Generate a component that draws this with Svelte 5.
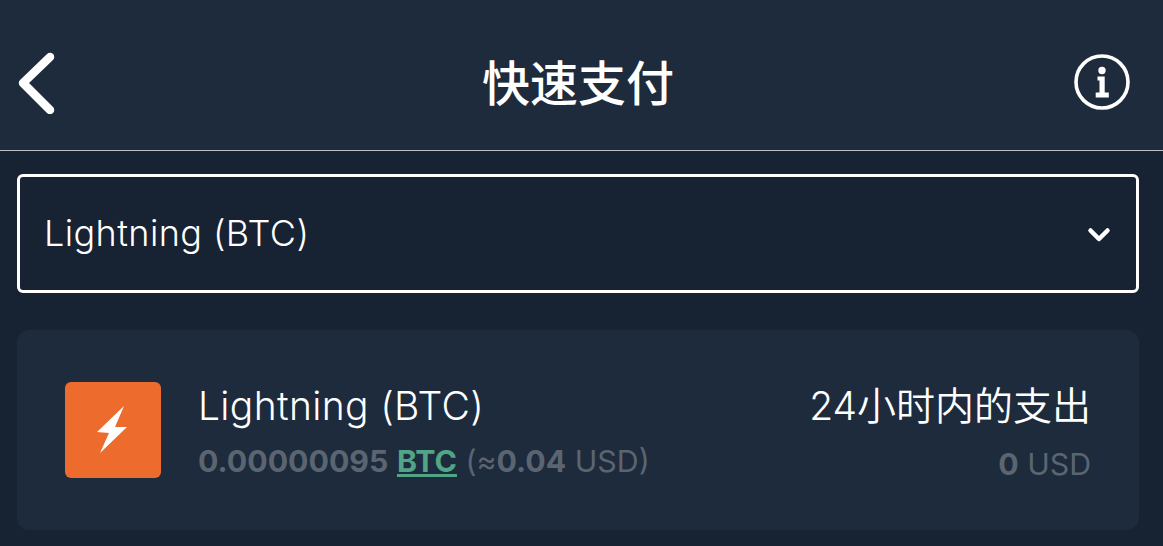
<script>
  const account = { name: 'Lightning (BTC)', balance: '0.00000095', unit: 'BTC', fiat: '0.04' };
</script>

<div class="page">
  <header class="topbar">
    <button class="icon-btn" aria-label="返回">
      <svg width="40" height="64" viewBox="0 0 40 64">
        <path d="M33 7 L6 33 L33 60" fill="none" stroke="#fff" stroke-width="8.5" stroke-linecap="round" stroke-linejoin="round" />
      </svg>
    </button>
    <h1>快速支付</h1>
    <button class="icon-btn info-btn" aria-label="信息">
      <svg width="56" height="56" viewBox="0 0 56 56">
        <circle cx="28" cy="28" r="26" fill="none" stroke="#fff" stroke-width="3.6" />
        <circle cx="28" cy="16.5" r="3.7" fill="#fff" />
        <path d="M23.5 22.5 H30.7 V38.5 H34.8 V43.5 H21.7 V38.5 H25.5 V26.5 H23.5 Z" fill="#fff" />
      </svg>
    </button>
  </header>

  <main class="content">
    <div class="select">
      <span>{account.name}</span>
      <svg width="24" height="16" viewBox="0 0 24 16">
        <path d="M3.5 3.5 L12 12 L20.5 3.5" fill="none" stroke="#fff" stroke-width="4.5" stroke-linecap="round" stroke-linejoin="round" />
      </svg>
    </div>

    <section class="card">
      <div class="logo">
        <svg width="32" height="48" viewBox="0 0 32 48">
          <path d="M27 0 L0 26 L12 27 L3 47 L30 21 L18 21 Z" fill="#fff" />
        </svg>
      </div>
      <div class="info">
        <div class="name">{account.name}</div>
        <div class="sub"><b>{account.balance}</b> <a href="#btc">{account.unit}</a> (≈<b>{account.fiat}</b> USD)</div>
      </div>
      <div class="spend">
        <div class="name">24小时内的支出</div>
        <div class="sub"><b>0</b> USD</div>
      </div>
    </section>
  </main>
</div>

<style>
  :global(body) {
    margin: 0;
    background: #172232;
  }

  .page {
    height: 546px;
    overflow: hidden;
    font-family: Inter, "Noto Sans CJK SC", sans-serif;
    color: #fff;
  }

  .topbar {
    height: 151px;
    box-sizing: border-box;
    padding: 14px 33px 0 17px;
    display: grid;
    grid-template-columns: 1fr auto 1fr;
    align-items: center;
    background: #1e2b3c;
    border-bottom: 1px solid #b9bec5;
  }

  .topbar h1 {
    margin: -5px 0 0;
    padding-left: 9px;
    font-size: 48px;
    font-weight: 500;
    text-align: center;
  }

  .icon-btn {
    padding: 0;
    border: 0;
    background: none;
    display: flex;
  }

  .info-btn {
    justify-self: end;
  }

  .content {
    padding: 23px 24px 0 17px;
  }

  .select {
    height: 119px;
    box-sizing: border-box;
    border: 3px solid #fff;
    border-radius: 6px;
    padding: 0 25px 0 24px;
    display: flex;
    align-items: center;
    justify-content: space-between;
    font-size: 36px;
    font-weight: 350;
    letter-spacing: 0.4px;
    background: #172232;
  }

  .select span {
    margin-top: -1px;
  }

  .select svg {
    margin-top: 3px;
  }

  .card {
    margin-top: 37px;
    height: 200px;
    box-sizing: border-box;
    padding: 0 48px;
    display: flex;
    align-items: center;
    background: #1e2b3c;
    border-radius: 12px;
  }

  .logo {
    width: 96px;
    height: 96px;
    flex: none;
    margin-right: 37px;
    border-radius: 6px;
    background: #ec6b2d;
    display: flex;
    align-items: center;
    justify-content: center;
  }

  .info {
    flex: 1;
    margin-top: 3px;
  }

  .spend {
    margin-top: 5px;
    text-align: right;
  }

  .name {
    font-size: 39px;
    font-weight: 350;
    letter-spacing: 0.35px;
    line-height: 48px;
  }

  .spend .name {
    letter-spacing: 0;
  }

  .sub {
    margin-top: 11px;
    font-size: 30.3px;
    line-height: 40px;
    color: #5b6572;
  }

  .spend .sub {
    margin-top: 14px;
  }

  .sub b {
    font-weight: 700;
  }

  .sub a {
    color: #4fa586;
    font-weight: 700;
    text-decoration: underline;
  }
</style>
